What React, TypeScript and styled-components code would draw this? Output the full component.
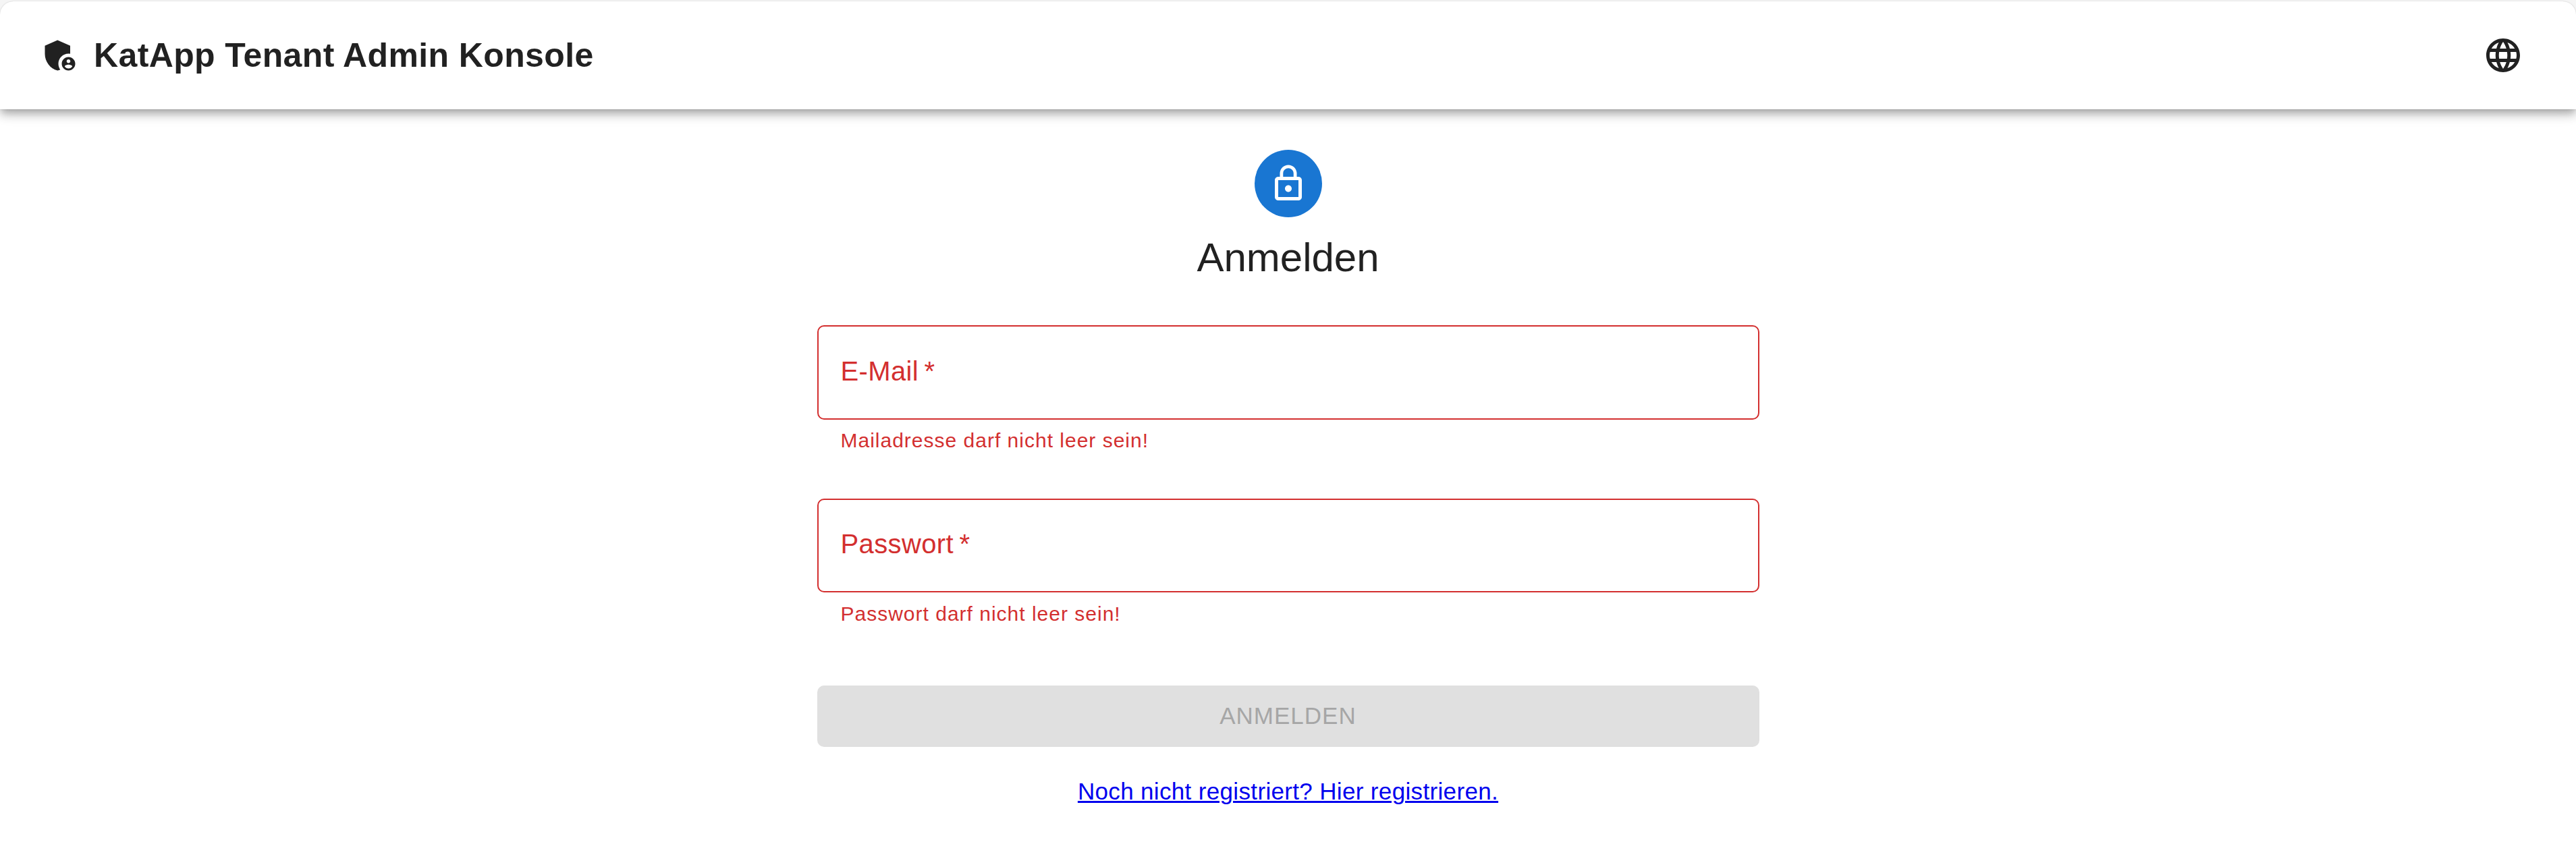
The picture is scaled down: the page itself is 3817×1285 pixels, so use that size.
import React from "react";
import styled, { createGlobalStyle } from "styled-components";

const GlobalStyle = createGlobalStyle`
  body {
    margin: 0;
    background: #fff;
    color: rgba(0, 0, 0, 0.87);
    font-family: "Liberation Sans", Arial, sans-serif;
  }
`;

const Frame = styled.div`
  box-sizing: border-box;
  height: 162px;
  padding-top: 2px;
  background: #f5f5f5;
  box-shadow: 0 5px 10px -2.5px rgba(0, 0, 0, 0.2),
    0 10px 12.5px 0 rgba(0, 0, 0, 0.14), 0 2.5px 25px 0 rgba(0, 0, 0, 0.12);
`;

const AppBar = styled.header`
  box-sizing: border-box;
  display: flex;
  align-items: center;
  height: 160px;
  padding: 0 78px 0 59px;
  background: #fff;
  border-radius: 20px 20px 0 0;
  box-shadow: 0 0 2px rgba(0, 0, 0, 0.2);
`;

const Icon = styled.svg`
  display: block;
  flex-shrink: 0;
  width: 60px;
  height: 60px;
  fill: currentColor;
`;

const Title = styled.h1`
  flex: 1;
  margin: 0 0 0 20px;
  font-size: 50px;
  font-weight: 700;
  line-height: 80px;
  letter-spacing: 0.0075em;
`;

const Main = styled.main`
  display: flex;
  flex-direction: column;
  align-items: center;
  width: 1396px;
  margin: 0 auto;
  padding-top: 60px;
`;

const Avatar = styled.div`
  display: flex;
  align-items: center;
  justify-content: center;
  width: 100px;
  height: 100px;
  border-radius: 50%;
  background: #1976d2;
  color: #fff;
`;

const Heading = styled.h2`
  margin: 20px 0 0;
  font-size: 60px;
  font-weight: 400;
  line-height: 80px;
`;

const Form = styled.form`
  display: flex;
  flex-direction: column;
  width: 100%;
  margin-top: 20px;
`;

const Field = styled.div`
  margin: 40px 0 20px;
  color: #d32f2f;
`;

const FieldBox = styled.div`
  box-sizing: border-box;
  display: flex;
  align-items: center;
  height: 139.5px;
  padding: 0 33px 3px;
  border: 2px solid #d32f2f;
  border-radius: 10px;
`;

const Label = styled.label`
  font-size: 40px;
  line-height: 57.5px;
  letter-spacing: 0.00938em;
`;

const Helper = styled.p`
  margin: 6.5px 35px 0;
  padding-bottom: 1px;
  font-size: 30px;
  line-height: 49.8px;
  letter-spacing: 0.03333em;
`;

const SubmitButton = styled.button`
  height: 91px;
  margin: 60px 0 41.5px;
  padding: 0 0 2px;
  border: 0;
  border-radius: 10px;
  background: #e0e0e0;
  color: #a6a6a6;
  font-family: inherit;
  font-size: 35px;
  line-height: 61px;
  letter-spacing: 0.02857em;
  text-transform: uppercase;
`;

const RegisterLink = styled.a`
  align-self: center;
  color: #0000ee;
  font-size: 35px;
  line-height: 50px;
  letter-spacing: 0.0098em;
  text-decoration: underline;
  text-decoration-thickness: 3px;
  text-underline-offset: 2px;
`;

interface TextFieldProps {
  label: string;
  error: string;
}

const TextField = ({ label, error }: TextFieldProps) => (
  <Field>
    <FieldBox>
      <Label>{label}{"\u2009*"}</Label>
    </FieldBox>
    <Helper>{error}</Helper>
  </Field>
);

const AdminIcon = () => (
  <Icon viewBox="0 0 24 24">
    <path d="M17 11c.34 0 .67.04 1 .09V6.27L10.5 3 3 6.27v4.91c0 4.54 3.2 8.79 7.5 9.82.55-.13 1.08-.32 1.6-.55-.69-.98-1.1-2.17-1.1-3.45 0-3.31 2.69-6 6-6z" />
    <path d="M17 13c-2.21 0-4 1.79-4 4s1.79 4 4 4 4-1.79 4-4-1.79-4-4-4zm0 1.38c.62 0 1.12.51 1.12 1.12s-.51 1.12-1.12 1.12-1.12-.51-1.12-1.12.5-1.12 1.12-1.12zm0 5.37c-.93 0-1.74-.46-2.24-1.17.05-.72 1.51-1.08 2.24-1.08s2.19.36 2.24 1.08c-.5.71-1.31 1.17-2.24 1.17z" />
  </Icon>
);

const LanguageIcon = () => (
  <Icon viewBox="0 0 24 24">
    <path d="M11.99 2C6.47 2 2 6.48 2 12s4.47 10 9.99 10C17.52 22 22 17.52 22 12S17.52 2 11.99 2zm6.93 6h-2.95c-.32-1.25-.78-2.45-1.38-3.56 1.84.63 3.37 1.91 4.33 3.56zM12 4.04c.83 1.2 1.48 2.53 1.91 3.96h-3.82c.43-1.43 1.08-2.76 1.91-3.96zM4.26 14C4.1 13.36 4 12.69 4 12s.1-1.36.26-2h3.38c-.08.66-.14 1.32-.14 2s.06 1.34.14 2H4.26zm.82 2h2.95c.32 1.25.78 2.45 1.38 3.56-1.84-.63-3.37-1.9-4.33-3.56zm2.95-8H5.08c.96-1.66 2.49-2.93 4.33-3.56C8.81 5.55 8.35 6.75 8.03 8zM12 19.96c-.83-1.2-1.48-2.53-1.91-3.96h3.82c-.43 1.43-1.08 2.76-1.91 3.96zM14.34 14H9.66c-.09-.66-.16-1.32-.16-2s.07-1.35.16-2h4.68c.09.65.16 1.32.16 2s-.07 1.34-.16 2zm.25 5.56c.6-1.11 1.06-2.31 1.38-3.56h2.95c-.96 1.65-2.49 2.93-4.33 3.56zM16.36 14c.08-.66.14-1.32.14-2s-.06-1.34-.14-2h3.38c.16.64.26 1.31.26 2s-.1 1.36-.26 2h-3.38z" />
  </Icon>
);

const LockIcon = () => (
  <Icon viewBox="0 0 24 24">
    <path d="M12 17c1.1 0 2-.9 2-2s-.9-2-2-2-2 .9-2 2 .9 2 2 2zm6-9h-1V6c0-2.76-2.24-5-5-5S7 3.24 7 6v2H6c-1.1 0-2 .9-2 2v10c0 1.1.9 2 2 2h12c1.1 0 2-.9 2-2V10c0-1.1-.9-2-2-2zM8.9 6c0-1.71 1.39-3.1 3.1-3.1s3.1 1.39 3.1 3.1v2H8.9V6zM18 20H6V10h12v10z" />
  </Icon>
);

export default function App() {
  return (
    <>
      <GlobalStyle />
      <Frame>
        <AppBar>
          <AdminIcon />
          <Title>KatApp Tenant Admin Konsole</Title>
          <LanguageIcon />
        </AppBar>
      </Frame>
      <Main>
        <Avatar>
          <LockIcon />
        </Avatar>
        <Heading>Anmelden</Heading>
        <Form>
          <TextField label="E-Mail" error="Mailadresse darf nicht leer sein!" />
          <TextField label="Passwort" error="Passwort darf nicht leer sein!" />
          <SubmitButton type="button" disabled>
            Anmelden
          </SubmitButton>
          <RegisterLink href="#">Noch nicht registriert? Hier registrieren.</RegisterLink>
        </Form>
      </Main>
    </>
  );
}
